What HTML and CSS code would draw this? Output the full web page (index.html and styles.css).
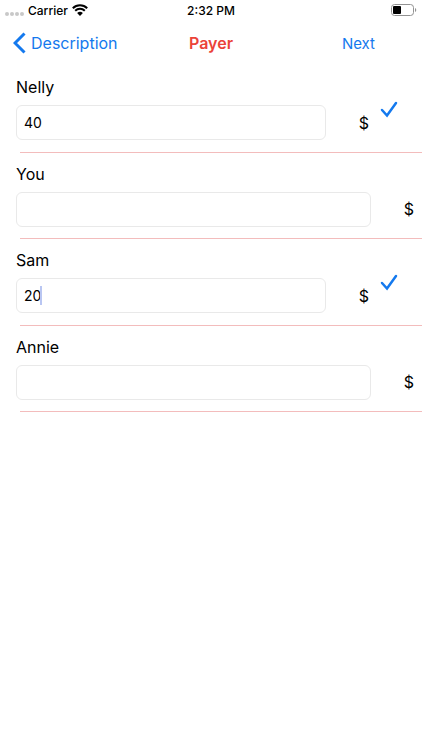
FILE: index.html
```html
<!DOCTYPE html>
<html lang="en">
<head>
<meta charset="utf-8">
<meta name="viewport" content="width=device-width, initial-scale=1">
<title>Payer</title>
<link rel="stylesheet" href="styles.css">
</head>
<body>
<div class="status">
  <div class="carrier">
    <span class="dots"><i></i><i></i><i></i><i></i></span>
    <span>Carrier</span>
    <svg class="wifi" width="16" height="12" viewBox="0 0 16 12" aria-hidden="true">
      <path d="M0.8 4.3a10.2 10.2 0 0 1 14.4 0" />
      <path d="M3.2 6.8a6.8 6.8 0 0 1 9.6 0" />
      <path class="solid" d="M8 12L5.1 9.1a4.1 4.1 0 0 1 5.8 0z" />
    </svg>
  </div>
  <time>2:32 PM</time>
  <svg class="battery" width="26" height="12" viewBox="0 0 26 12" aria-hidden="true">
    <rect x="0.5" y="0.5" width="22" height="11" rx="3" fill="none" stroke="#929292" />
    <rect x="2" y="2" width="8" height="8" rx="1" />
    <path d="M24 4v4a2.2 2.2 0 0 0 0-4z" fill="#929292" />
  </svg>
</div>
<header class="nav">
  <a class="back" href="#description">
    <svg width="13" height="22" viewBox="0 0 13 22" aria-hidden="true"><path d="M11.500 1.500L2 11l9.500 9.500" /></svg>
    <span>Description</span>
  </a>
  <h1>Payer</h1>
  <button class="next" type="button">Next</button>
</header>
<main class="list">
  <section class="row">
    <div class="content">
      <label for="nelly">Nelly</label>
      <div class="amount"><div class="field"><input id="nelly" type="text" inputmode="decimal" value="40"></div><span class="unit">$</span></div>
    </div>
    <div class="accessory"><svg width="24" height="20" viewBox="0 0 24 20" aria-hidden="true"><path d="M5 11l5 5.500L19 4" /></svg></div>
  </section>
  <section class="row">
    <div class="content">
      <label for="you">You</label>
      <div class="amount"><div class="field"><input id="you" type="text" inputmode="decimal"></div><span class="unit">$</span></div>
    </div>
  </section>
  <section class="row">
    <div class="content">
      <label for="sam">Sam</label>
      <div class="amount"><div class="field"><input id="sam" type="text" inputmode="decimal" value="20"><span class="caret"></span></div><span class="unit">$</span></div>
    </div>
    <div class="accessory"><svg width="24" height="20" viewBox="0 0 24 20" aria-hidden="true"><path d="M5 11l5 5.500L19 4" /></svg></div>
  </section>
  <section class="row">
    <div class="content">
      <label for="annie">Annie</label>
      <div class="amount"><div class="field"><input id="annie" type="text" inputmode="decimal"></div><span class="unit">$</span></div>
    </div>
  </section>
</main>
</body>
</html>
```
FILE: styles.css
```css
* { box-sizing: border-box; }

body {
  margin: 0;
  background: #fff;
  color: #000;
  font-family: Inter, "Liberation Sans", sans-serif;
  font-size: 16px;
}

.status {
  display: grid;
  grid-template-columns: 1fr auto 1fr;
  align-items: center;
  height: 20px;
  padding: 0 5px;
  font-size: 12px;
  font-weight: 500;
}

.carrier { display: flex; align-items: center; gap: 4px; }
.dots { display: flex; gap: 1px; padding-top: 8px; }
.dots i { width: 4px; height: 4px; border-radius: 2px; background: #c8c8c8; }
.wifi path { fill: none; stroke: #000; stroke-width: 2; }
.wifi .solid { fill: #000; stroke: none; }
.battery { justify-self: end; }

.nav {
  display: grid;
  grid-template-columns: 1fr auto 1fr;
  align-items: center;
  height: 46px;
}

.back {
  display: flex;
  align-items: center;
  gap: 5px;
  padding-left: 13px;
  color: #1479ee;
  text-decoration: none;
}
.back path { fill: none; stroke: #1479ee; stroke-width: 3; }

h1 { margin: 0; color: #eb4339; font-size: 16px; font-weight: 600; }

.next {
  justify-self: end;
  margin-right: 47px;
  padding: 0;
  border: 0;
  background: none;
  color: #1479ee;
  font: inherit;
  font-size: 15px;
}

.list { display: grid; grid-auto-rows: 1fr; min-height: 346px; }

.row {
  position: relative;
  display: flex;
  align-items: center;
  padding-left: 16px;
}
.row::after {
  content: "";
  position: absolute;
  right: 0;
  bottom: 0;
  left: 20px;
  height: 1px;
  background: #f3bcbc;
}

.content { flex: 1; min-width: 0; padding-bottom: 3px; }
label { display: block; line-height: 24px; margin-bottom: 6px; }
.amount { display: flex; align-items: center; gap: 25px; }
.field { position: relative; flex: 1; min-width: 0; }

input {
  display: block;
  width: 100%;
  height: 35px;
  padding: 0 7px;
  border: 1px solid #e9e9e9;
  border-radius: 6px;
  outline: 0;
  background: #fff;
  color: #000;
  font: inherit;
  font-size: 14px;
}

.caret {
  position: absolute;
  top: 8px;
  left: 24px;
  width: 2px;
  height: 19px;
  background: #b9c6f2;
}

.unit { width: 26px; text-align: center; }
.accessory { width: 45px; }
.accessory svg { display: block; }
.accessory path { fill: none; stroke: #1479ee; stroke-width: 2.5; stroke-linecap: round; }
```
